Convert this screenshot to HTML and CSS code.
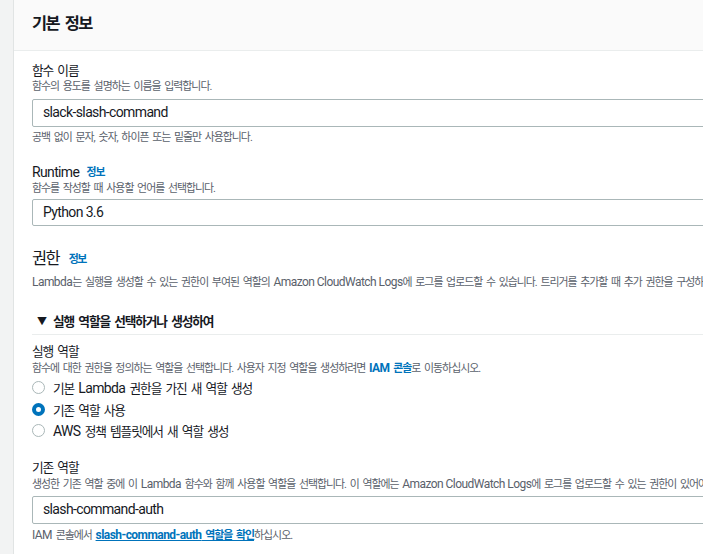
FILE: index.html
```html
<!DOCTYPE html>
<html lang="ko">
<head>
<meta charset="utf-8">
<link rel="stylesheet" href="styles.css">
</head>
<body>
<div class="page">
  <div class="strip"></div>
  <div class="panel">
    <div class="panel-header"><h1 class="title ko">기본 정보</h1></div>
    <div class="panel-body">
      <div class="label ko f1">함수 이름</div>
      <div class="desc ko">함수의 용도를 설명하는 이름을 입력합니다.</div>
      <div class="input i1">slack-slash-command</div>
      <div class="hint ko">공백 없이 문자, 숫자, 하이픈 또는 밑줄만 사용합니다.</div>

      <div class="label ko f2"><span class="en">Runtime</span> <span class="info">정보</span></div>
      <div class="desc ko">함수를 작성할 때 사용할 언어를 선택합니다.</div>
      <div class="input i2">Python 3.6</div>

      <h2 class="section ko">권한 <span class="info">정보</span></h2>
      <div class="desc ko d-perm"><span class="en">Lambda</span>는 실행을 생성할 수 있는 권한이 부여된 역할의 <span class="en">Amazon CloudWatch Logs</span>에 로그를 업로드할 수 있습니다. 트리거를 추가할 때 추가 권한을 구성하고 수정할 수 있습니다.</div>

      <div class="toggle ko"><span class="caret">▼</span>실행 역할을 선택하거나 생성하여</div>

      <div class="label ko f3">실행 역할</div>
      <div class="desc ko">함수에 대한 권한을 정의하는 역할을 선택합니다. 사용자 지정 역할을 생성하려면 <span class="link-b"><span class="en">IAM</span> 콘솔</span>로 이동하십시오.</div>
      <div class="radios">
        <div class="radio"><span class="dot"></span><span class="rl ko">기본 <span class="en">Lambda</span> 권한을 가진 새 역할 생성</span></div>
        <div class="radio"><span class="dot on"></span><span class="rl ko">기존 역할 사용</span></div>
        <div class="radio"><span class="dot"></span><span class="rl ko"><span class="en">AWS</span> 정책 템플릿에서 새 역할 생성</span></div>
      </div>

      <div class="label ko f4">기존 역할</div>
      <div class="desc ko">생성한 기존 역할 중에 이 <span class="en">Lambda</span> 함수와 함께 사용할 역할을 선택합니다. 이 역할에는 <span class="en">Amazon CloudWatch Logs</span>에 로그를 업로드할 수 있는 권한이 있어야 합니다.</div>
      <div class="input i3">slash-command-auth</div>
      <div class="hint ko"><span class="en">IAM</span> 콘솔에서 <span class="link-u"><span class="en">slash-command-auth</span> 역할을 확인</span>하십시오.</div>
    </div>
  </div>
</div>
</body>
</html>
```
FILE: styles.css
```css
html, body {
  margin: 0;
  padding: 0;
  overflow: hidden;
  background: #ffffff;
}
body {
  font-family: "Roboto", "Noto Sans CJK KR", sans-serif;
  color: #16191f;
}
.page {
  display: flex;
  width: 1000px;
  height: 554px;
}
.strip {
  width: 13px;
  flex: none;
  background: #f2f3f3;
  border-right: 1px solid #e1e4e4;
}
.panel {
  flex: 1;
  background: #fff;
}

/* Korean text: tighter tracking; Latin runs reset */
.ko {
  letter-spacing: -0.09em;
  word-spacing: 0.18em;
  white-space: nowrap;
}
.en {
  font-size: 1.1em;
  letter-spacing: -0.045em;
  word-spacing: 0;
}

.panel-header {
  height: 50px;
  background: #fafafa;
  border-bottom: 1px solid #eaeded;
  padding-left: 18px;
  display: flex;
  align-items: center;
}
.title {
  margin: 0 0 2px 0;
  font-size: 16.4px;
  font-weight: 700;
  line-height: 22px;
}
.panel-body {
  padding: 12px 0 0 18px;
}
.label {
  font-size: 12.7px;
  line-height: 16px;
}
.f2 { margin-top: 19px; }
.f3 { margin-top: 9px; }
.f4 { margin-top: 18px; }
.desc, .hint {
  font-size: 10.9px;
  line-height: 14px;
  color: #5a616b;
}
.desc { margin-top: 1px; }
.input {
  box-sizing: border-box;
  height: 27px;
  border: 1px solid #aab7b8;
  border-radius: 2px;
  padding: 0 10px;
  font-size: 14px;
  letter-spacing: -0.045em;
  line-height: 25px;
  margin-top: 4px;
  white-space: nowrap;
}
.i1 { height: 28px; margin-top: 5px; }
.i2 { margin-top: 3px; }
.i3 { height: 28px; margin-top: 4px; }
.hint { margin-top: 4px; }
.info {
  color: #0073bb;
  font-size: 10.9px;
  font-weight: 700;
  margin-left: 3px;
  vertical-align: 1px;
}
.section {
  margin: 22px 0 0 0;
  font-size: 16.4px;
  line-height: 22px;
  font-weight: 400;
}
.section .info { margin-left: 4px; }
.d-perm { margin-top: 4px; }
.toggle {
  margin-top: 20px;
  height: 24px;
  line-height: 24px;
  border-bottom: 1px solid #eaeded;
  font-size: 12.7px;
  font-weight: 700;
  color: #16191f;
}
.caret {
  display: inline-block;
  width: 21px;
  padding-left: 5px;
  font-size: 10px;
  letter-spacing: 0;
  color: #16191f;
  box-sizing: border-box;
  vertical-align: top;
}
.link-b {
  color: #0073bb;
  font-weight: 700;
}
.link-u {
  color: #0073bb;
  font-weight: 700;
  text-decoration: underline;
}
.radios {
  margin-top: 1px;
}
.radio {
  height: 21.6px;
  display: flex;
  align-items: center;
}
.rl {
  font-size: 12.7px;
}
.dot {
  box-sizing: border-box;
  width: 13px;
  height: 13px;
  border-radius: 50%;
  border: 1px solid #aab7b8;
  background: #fff;
  margin-right: 8px;
  flex: none;
}
.dot.on {
  border: 4px solid #0073bb;
}
```
